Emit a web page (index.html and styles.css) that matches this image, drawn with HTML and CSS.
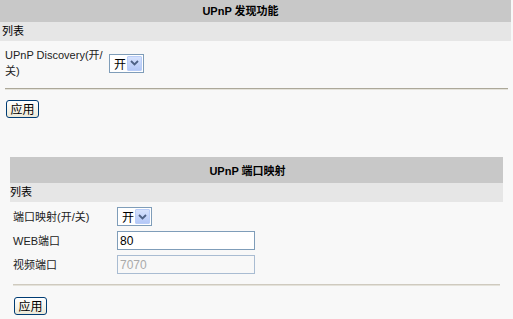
FILE: index.html
```html
<!DOCTYPE html>
<html lang="zh-CN">
<head>
    <meta charset="UTF-8">
    <title>UPnP</title>
    <link rel="stylesheet" href="styles.css">
</head>
<body>
    <div class="section first">
        <div class="title">UPnP 发现功能</div>
        <div class="subtitle">列表</div>
        <div class="form">
            <div class="row">
                <label class="label">UPnP Discovery(开/关)</label>
                <div class="select">
                    <span class="value">开</span>
                    <span class="arrow"><svg width="9" height="6" viewBox="0 0 9 6"><path d="M1 1 L4.5 4.5 L8 1" fill="none" stroke="#4d6185" stroke-width="1.8"/></svg></span>
                </div>
            </div>
        </div>
        <div class="line"></div>
        <button class="btn">应用</button>
    </div>

    <div class="section second">
        <div class="title">UPnP 端口映射</div>
        <div class="subtitle">列表</div>
        <div class="form">
            <div class="row">
                <label class="label">端口映射(开/关)</label>
                <div class="select">
                    <span class="value">开</span>
                    <span class="arrow"><svg width="9" height="6" viewBox="0 0 9 6"><path d="M1 1 L4.5 4.5 L8 1" fill="none" stroke="#4d6185" stroke-width="1.8"/></svg></span>
                </div>
            </div>
            <div class="row">
                <label class="label">WEB端口</label>
                <input class="text" type="text" value="80">
            </div>
            <div class="row">
                <label class="label">视频端口</label>
                <input class="text" type="text" value="7070" disabled>
            </div>
        </div>
        <div class="line"></div>
        <button class="btn">应用</button>
    </div>
</body>
</html>
```

FILE: styles.css
```css
body {
    margin: 0;
    background: #f8f8f8;
    font-family: "Liberation Sans", "Noto Sans CJK SC", sans-serif;
    font-size: 11px;
    color: #000;
}
.section.first {
    margin-right: 2px;
}
.section.second {
    margin: 39px 10px 0 10px;
}
.title {
    background: #c8c8c8;
    font-weight: bold;
    text-align: center;
}
.first .title {
    height: 22px;
    line-height: 22px;
    padding-right: 30px;
}
.second .title {
    height: 26px;
    line-height: 28px;
    padding-right: 18px;
}
.subtitle {
    background: #e6e6e6;
    height: 19px;
    line-height: 19px;
}
.first .subtitle {
    padding-left: 2px;
}
.form {
    display: flex;
    flex-direction: column;
}
.first .form {
    padding: 6px 0 0 5px;
}
.second .form {
    padding: 5px 0 0 3px;
    gap: 5px;
}
.row {
    display: flex;
    align-items: center;
    gap: 4px;
}
.label {
    width: 100px;
    line-height: 16px;
    color: #222;
}
.select {
    width: 35px;
    height: 19px;
    box-sizing: border-box;
    border: 1px solid #7f9db9;
    background: #fff;
    display: flex;
    align-items: center;
    justify-content: space-between;
}
.select .value {
    padding-left: 4px;
    font-size: 12px;
}
.select .arrow {
    width: 15px;
    height: 15px;
    margin-right: 1px;
    box-sizing: border-box;
    border: 1px solid #b9cdf8;
    border-radius: 1px;
    background: linear-gradient(#d6e2fd, #b4c8f7);
    display: flex;
    align-items: center;
    justify-content: center;
}
.text {
    width: 138px;
    height: 19px;
    box-sizing: border-box;
    margin: 0;
    border: 1px solid #7f9db9;
    background: #fff;
    padding: 0 2px;
    font-family: inherit;
    font-size: 12px;
    color: #000;
}
.text:disabled {
    background: #f8f8f8;
    border-color: #a9bcd2;
    color: #aaa;
}
.line {
    height: 1px;
    border-top: 1px solid #aca899;
    background: #e4e2da;
}
.first .line {
    margin: 9px 3px 0 5px;
}
.second .line {
    margin: 10px 3px 0 3px;
    border-top-color: #cfcabf;
}
.btn {
    display: block;
    width: 33px;
    height: 18px;
    padding: 0;
    border: 1px solid #003c74;
    border-radius: 3px;
    background: linear-gradient(#ffffff, #ece9d8);
    font-family: "Noto Sans CJK SC", sans-serif;
    font-size: 12px;
    line-height: 16px;
    color: #000;
}
.first .btn {
    margin: 10px 0 0 6px;
}
.second .btn {
    margin: 11px 0 0 4px;
}
```
